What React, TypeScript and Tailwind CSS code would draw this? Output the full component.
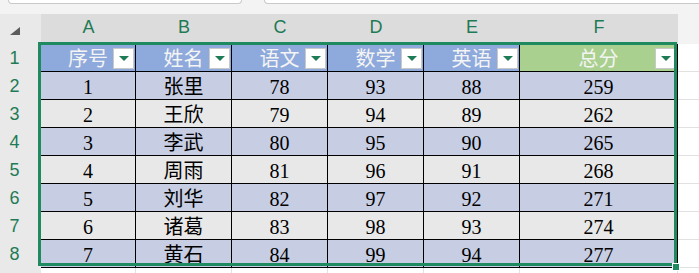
import React from "react";

const cols = [
  { key: "A", w: "w-[95px]", title: "序号" },
  { key: "B", w: "w-[96px]", title: "姓名" },
  { key: "C", w: "w-[96px]", title: "语文" },
  { key: "D", w: "w-[96px]", title: "数学" },
  { key: "E", w: "w-[96px]", title: "英语" },
  { key: "F", w: "w-[158px]", title: "总分" },
];

const data: (string | number)[][] = [
  [1, "张里", 78, 93, 88, 259],
  [2, "王欣", 79, 94, 89, 262],
  [3, "李武", 80, 95, 90, 265],
  [4, "周雨", 81, 96, 91, 268],
  [5, "刘华", 82, 97, 92, 271],
  [6, "诸葛", 83, 98, 93, 274],
  [7, "黄石", 84, 99, 94, 277],
];

function FilterButton() {
  return (
    <div className="absolute right-[1px] top-[4px] flex h-[21px] w-[21px] items-center justify-center border border-[#c9c9c9] bg-white">
      <div className="h-0 w-0 border-l-[5px] border-r-[5px] border-t-[5px] border-l-transparent border-r-transparent border-t-[#1e7b55]" />
    </div>
  );
}

function RowHead({ n }: { n: number | string }) {
  return (
    <div className="flex w-[41px] shrink-0 items-center justify-center bg-[#e9e9e9] pr-[12px] font-['Liberation_Sans',sans-serif] text-[18px] text-[#1e7b55]">
      {n}
    </div>
  );
}

export default function App() {
  return (
    <div className="relative h-[273px] w-[699px] overflow-hidden bg-white">
      {/* name box / formula bar edges */}
      <div className="flex h-[14px] bg-[#f3f3f3]">
        <div className="ml-[8px] h-[4px] w-[234px] rounded-b-[6px] border-x border-b border-[#c9c9c9] bg-white" />
        <div className="ml-[22px] h-[4px] flex-1 rounded-bl-[6px] border-b border-l border-[#c9c9c9] bg-white" />
      </div>

      {/* column letters */}
      <div className="flex h-[30px]">
        <div className="relative w-[41px] shrink-0 bg-[#e9e9e9]">
          <svg className="absolute left-[10px] top-[13px]" width="10" height="8" viewBox="0 0 10 8">
            <polygon points="10,0 10,8 0,8" fill="#5c5c5c" />
          </svg>
        </div>
        {cols.map((c) => (
          <div
            key={c.key}
            className={`${c.w} flex shrink-0 items-center justify-center bg-[#dcdcdc] pb-[4px] font-['Liberation_Sans',sans-serif] text-[18px] text-[#1e7b55]`}
          >
            {c.key}
          </div>
        ))}
        <div className="flex-1 bg-[#f3f3f3]" />
      </div>

      {/* header row */}
      <div className="flex h-[28px]">
        <RowHead n={1} />
        {cols.map((c) => (
          <div
            key={c.key}
            className={`${c.w} relative flex shrink-0 items-center justify-center border-r border-b border-black ${
              c.key === "F" ? "bg-[#a9d08e]" : "bg-[#8ea9db]"
            } font-['Noto_Sans_CJK_SC',sans-serif] text-[20px] text-[#f4f4f4]`}
          >
            {c.title}
            <FilterButton />
          </div>
        ))}
        <div className="flex-1 border-b border-[#e1e1e1]" />
      </div>

      {/* data rows */}
      {data.map((row, i) => (
        <div key={i} className="flex h-[28px]">
          <RowHead n={i + 2} />
          {row.map((v, j) => (
            <div
              key={j}
              className={`${cols[j].w} flex shrink-0 items-center justify-center border-r border-b border-black ${
                i % 2 === 0 ? "bg-[#c7cde2]" : "bg-[#e8e8e8]"
              } pt-[2px] font-['Liberation_Serif','Noto_Sans_CJK_SC',serif] text-[20px] text-black`}
            >
              {v}
            </div>
          ))}
          <div className="flex-1 border-b border-[#e1e1e1]" />
        </div>
      ))}

      {/* partial row 9 */}
      <div className="flex h-[28px]">
        <RowHead n="" />
        {cols.map((c) => (
          <div key={c.key} className={`${c.w} shrink-0 border-r border-[#e1e1e1]`} />
        ))}
      </div>

      {/* selection */}
      <div className="absolute left-[38px] top-[42px] h-[224px] w-[639px] border-[3px] border-[#1f8a5f]" />
      <div className="absolute left-[672px] top-[263px] h-[8px] w-[8px] border border-white bg-[#1f8a5f]" />
    </div>
  );
}
